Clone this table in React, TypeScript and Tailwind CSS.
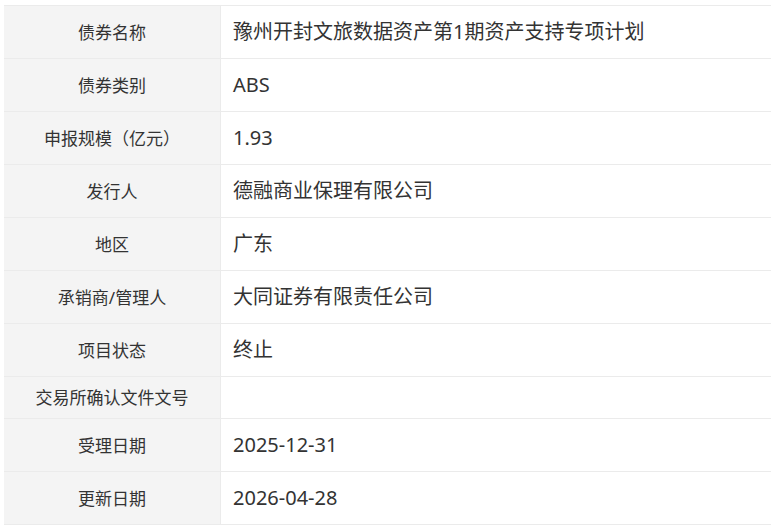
import React from "react";

const rows: { label: string; value: string }[] = [
  { label: "债券名称", value: "豫州开封文旅数据资产第1期资产支持专项计划" },
  { label: "债券类别", value: "ABS" },
  { label: "申报规模（亿元）", value: "1.93" },
  { label: "发行人", value: "德融商业保理有限公司" },
  { label: "地区", value: "广东" },
  { label: "承销商/管理人", value: "大同证券有限责任公司" },
  { label: "项目状态", value: "终止" },
  { label: "交易所确认文件文号", value: "" },
  { label: "受理日期", value: "2025-12-31" },
  { label: "更新日期", value: "2026-04-28" },
];

export default function App() {
  return (
    <div
      className="w-[771px] h-[527px] bg-white pt-[5px] pl-[4px] text-[#333]"
      style={{ fontFamily: '"Noto Sans", "Noto Sans CJK SC", sans-serif' }}
    >
      <div className="border-t border-[#ebebeb]">
        {rows.map((r) => (
          <div
            key={r.label}
            className={`flex border-b border-[#ebebeb] ${r.value ? "h-[53px]" : "h-[42px]"}`}
          >
            <div className="w-[217px] shrink-0 bg-[#f4f4f4] border-r border-[#ebebeb] flex items-center justify-center text-[17px] leading-none">
              {r.label}
            </div>
            <div className="flex-1 flex items-center pl-[12px] text-[20px] leading-none">
              {r.value}
            </div>
          </div>
        ))}
      </div>
    </div>
  );
}
